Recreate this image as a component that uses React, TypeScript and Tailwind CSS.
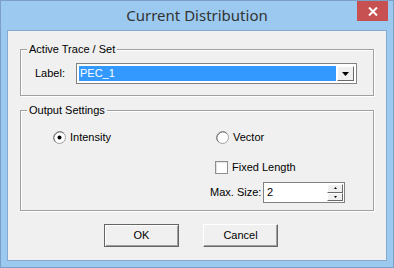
import React from "react";

/* Classic Win8 style dialog: "Current Distribution" */

const ui = { fontFamily: '"Liberation Sans", Arial, sans-serif' };

function Radio({ checked }: { checked?: boolean }) {
  return (
    <svg width="13" height="13" viewBox="0 0 13 13" className="shrink-0">
      <circle cx="6.5" cy="6.5" r="6" fill="#fff" stroke="#a0a0a0" />
      <path d="M2.3 10.7 A6 6 0 0 1 10.7 2.3" fill="none" stroke="#6d6d6d" strokeWidth="1" />
      {checked && <circle cx="6.5" cy="6.5" r="2" fill="#000" />}
    </svg>
  );
}

function GroupBox({
  title,
  className,
  children,
}: {
  title: string;
  className?: string;
  children?: React.ReactNode;
}) {
  return (
    <div
      className={`relative border border-[#a0a0a0] shadow-[inset_1px_1px_0_#fff,1px_1px_0_#fff] ${className ?? ""}`}
    >
      {/* caption sits over the top border */}
      <span className="absolute left-[6px] top-[-8px] bg-[#f0f0f0] px-[2px] text-[11px] leading-[14px] text-black">
        {title}
      </span>
      {children}
    </div>
  );
}

function Button({ label, isDefault }: { label: string; isDefault?: boolean }) {
  return (
    <div
      className={`flex h-[23px] w-[75px] items-center justify-center bg-[#f0f0f0] text-[11px] text-black ${
        isDefault
          ? "border border-[#646464] shadow-[inset_1px_1px_0_#fff,inset_-1px_-1px_0_#a0a0a0]"
          : "border border-[#fff] border-r-[#696969] border-b-[#696969] shadow-[inset_-1px_-1px_0_#a0a0a0]"
      }`}
    >
      {label}
    </div>
  );
}

function SpinArrow({ up }: { up?: boolean }) {
  return (
    <div className="flex flex-1 items-center justify-center border border-[#fff] border-r-[#696969] border-b-[#696969] bg-[#f0f0f0]">
      <svg width="3" height="2" viewBox="0 0 3 2">
        <path d={up ? "M0 2 H3 L1.5 0 Z" : "M0 0 H3 L1.5 2 Z"} fill="#000" />
      </svg>
    </div>
  );
}

export default function App() {
  return (
    <div
      className="flex h-[268px] w-[394px] flex-col border border-[#7c9fc6] bg-[#9bc9f0] px-[6px] pb-[6px]"
      style={ui}
    >
      {/* title bar */}
      <div className="relative flex h-[29px] shrink-0 items-center justify-center">
        <span
          className="text-[15px] text-[#333]"
          style={{ fontFamily: '"Noto Sans", "Liberation Sans", sans-serif' }}
        >
          Current Distribution
        </span>
        <div className="absolute right-[-1px] top-0 flex h-[20px] w-[31px] items-center justify-center bg-[#c75050]">
          <svg width="10" height="9" viewBox="0 0 10 9">
            <path d="M1 0.5 L9 8.5 M9 0.5 L1 8.5" stroke="#fff" strokeWidth="2" />
          </svg>
        </div>
      </div>

      {/* client area */}
      <div className="flex flex-1 flex-col border border-[#86a9cf] bg-[#f0f0f0] px-[12px]">
        <GroupBox title="Active Trace / Set" className="mt-[18px] h-[47px]">
          <div className="flex items-center pl-[14px] pt-[13px]">
            <span className="w-[41px] text-[11px] text-black">Label:</span>
            <div className="flex h-[21px] w-[281px] items-stretch border border-[#828282] bg-white p-[2px]">
              <div className="flex flex-1 items-center bg-[#3399ff] pl-[1px] text-[11px] text-white">
                PEC_1
              </div>
              <div className="ml-[1px] flex w-[17px] items-center justify-center border border-[#fff] border-r-[#696969] border-b-[#696969] bg-[#f0f0f0]">
                <svg width="7" height="4" viewBox="0 0 7 4">
                  <path d="M0 0 H7 L3.5 4 Z" fill="#000" />
                </svg>
              </div>
            </div>
          </div>
        </GroupBox>

        <GroupBox title="Output Settings" className="mt-[14px] h-[101px]">
          <div className="flex h-[33px] items-end">
            <div className="flex w-[195px] items-center gap-[4px] pl-[32px]">
              <Radio checked />
              <span className="text-[11px] leading-[13px] text-black">Intensity</span>
            </div>
            <div className="flex items-center gap-[4px]">
              <Radio />
              <span className="text-[11px] leading-[13px] text-black">Vector</span>
            </div>
          </div>
          <div className="flex flex-col pl-[189px]">
            <div className="mt-[17px] flex h-[13px] items-center gap-[4px] pl-[5px]">
              <div className="h-[13px] w-[13px] border border-[#8f8f8f] bg-white shadow-[inset_1px_1px_0_#e3e3e3]" />
              <span className="text-[11px] leading-[13px] text-black">Fixed Length</span>
            </div>
            <div className="mt-[8px] flex h-[21px] items-center">
              <span className="w-[53px] text-[11px] leading-[13px] text-black">Max. Size:</span>
              <div className="flex h-[21px] w-[82px] border border-[#828282] bg-white p-[1px]">
                <span className="flex-1 pl-[2px] text-[11px] leading-[17px] text-black">2</span>
                <div className="flex w-[16px] flex-col">
                  <SpinArrow up />
                  <SpinArrow />
                </div>
              </div>
            </div>
          </div>
        </GroupBox>

        <div className="mt-[13px] flex gap-[24px] pl-[84px]">
          <Button label="OK" isDefault />
          <Button label="Cancel" />
        </div>
      </div>
    </div>
  );
}
